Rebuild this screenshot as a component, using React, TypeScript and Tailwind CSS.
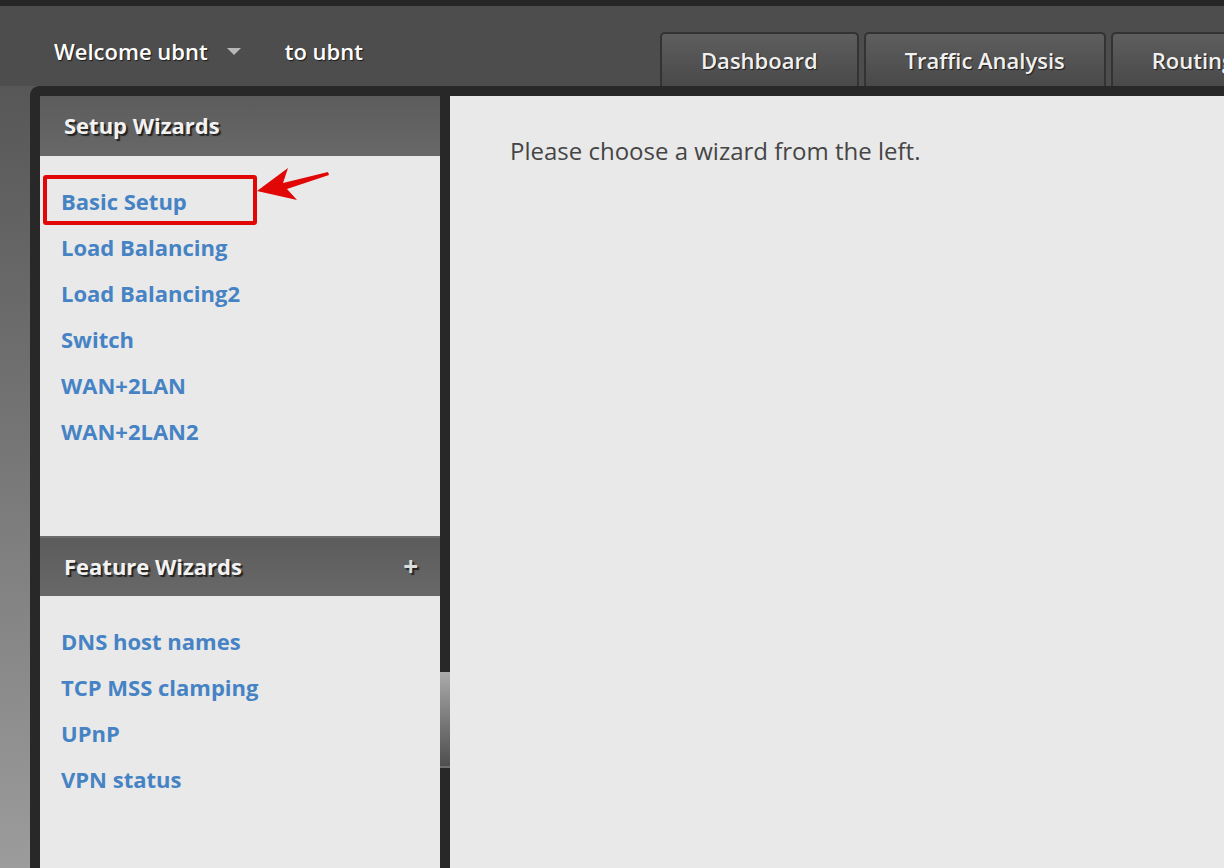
import React from "react";

const setupWizards = ["Basic Setup", "Load Balancing", "Load Balancing2", "Switch", "WAN+2LAN", "WAN+2LAN2"];
const featureWizards = ["DNS host names", "TCP MSS clamping", "UPnP", "VPN status"];
const tabs = ["Dashboard", "Traffic Analysis", "Routing"];

const shadow = "[text-shadow:1px_1px_1px_#1c1c1c]";

export default function App() {
  return (
    <div className="w-[1224px] h-[868px] overflow-hidden flex flex-col bg-gradient-to-b from-[#505050] to-[#9c9c9c] font-['Open_Sans',_'Liberation_Sans',_sans-serif]">
      {/* top strip */}
      <div className="h-[6px] bg-[#262626] shrink-0" />
      {/* header */}
      <div className="h-[80px] shrink-0 bg-[#4d4d4d] flex items-end overflow-hidden">
        <div className="w-[660px] shrink-0 self-stretch flex items-center whitespace-nowrap pl-[54px] pt-[10px] text-white text-[22px] font-semibold">
          <span className={shadow}>Welcome ubnt</span>
          <span className="ml-[19px] w-0 h-0 border-l-[7px] border-r-[7px] border-t-[7px] border-l-transparent border-r-transparent border-t-[#b8b8b8]" />
          <span className={`ml-[44px] ${shadow}`}>to ubnt</span>
        </div>
        <div className="flex gap-[5px] shrink-0">
          {tabs.map((t) => (
            <div
              key={t}
              className={`h-[54px] px-[39px] shrink-0 whitespace-nowrap rounded-t-[5px] border-2 border-b-0 border-[#333] bg-gradient-to-b from-[#5e5e5e] to-[#494949] flex items-center justify-center text-[22px] font-semibold text-[#f0f0f0] ${shadow}`}
            >
              {t}
            </div>
          ))}
        </div>
      </div>
      {/* content frame */}
      <div className="flex-1 ml-[30px] bg-[#282828] rounded-tl-[9px] pt-[10px] pl-[10px] flex min-h-0">
        {/* sidebar */}
        <aside className="w-[400px] shrink-0 bg-[#e9e9e9] flex flex-col relative">
          <div className="h-[60px] pb-[2px] bg-gradient-to-b from-[#5c5c5c] to-[#686868] flex items-center pl-[24px] text-[22px] font-bold text-[#f2f2f2] [text-shadow:2px_2px_1px_#222]">
            Setup Wizards
          </div>
          <div className="h-[380px] pt-[22px] pl-[21px] flex flex-col">
            {setupWizards.map((w) => (
              <a key={w} className="h-[46px] flex items-center text-[22px] font-bold text-[#4683c4] cursor-pointer">
                {w}
              </a>
            ))}
          </div>
          <div className="h-[60px] pb-[2px] border-t-2 border-[#6c6c6c] bg-gradient-to-b from-[#5c5c5c] to-[#686868] flex items-center pl-[24px] pr-[22px] text-[22px] font-bold text-[#f2f2f2] [text-shadow:2px_2px_1px_#222]">
            <span>Feature Wizards</span>
            <span className="ml-auto text-[26px] font-bold text-[#dcdcdc] leading-none">+</span>
          </div>
          <div className="pt-[22px] pl-[21px] flex flex-col">
            {featureWizards.map((w) => (
              <a key={w} className="h-[46px] flex items-center text-[22px] font-bold text-[#4683c4] cursor-pointer">
                {w}
              </a>
            ))}
          </div>

          {/* annotation: red box + arrow */}
          <div className="absolute left-[3px] top-[79px] w-[214px] h-[50px] border-[4px] border-[#e10707] rounded-[3px]" />
          <svg className="absolute left-[210px] top-[65px]" width="130" height="45" viewBox="210 65 130 45">
            <polygon points="217,95 248,72 243,87 288,76 289,79 247,93 257,104" fill="#e10707" />
          </svg>
        </aside>
        {/* scrollbar */}
        <div className="w-[10px] shrink-0 flex flex-col">
          <div className="h-[576px]" />
          <div className="h-[96px] bg-gradient-to-b from-[#ababab] to-[#4f4f4f] border-b-2 border-[#6e6e6e]" />
        </div>
        {/* main */}
        <main className="flex-1 bg-[#e9e9e9] pt-[39px] pl-[60px]">
          <p className="text-[24px] leading-[32px] text-[#454545]">Please choose a wizard from the left.</p>
        </main>
      </div>
    </div>
  );
}
